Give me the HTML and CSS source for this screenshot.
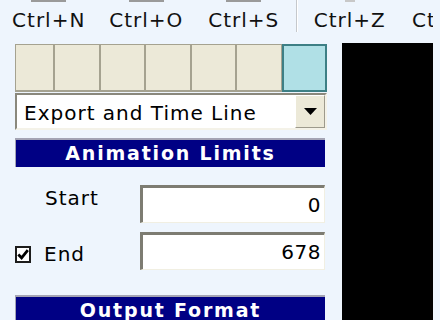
FILE: index.html
```html
<!DOCTYPE html>
<html>
<head>
<meta charset="utf-8">
<link rel="stylesheet" href="styles.css">
</head>
<body>
<div class="app">
  <div class="toolbar">
    <div class="tb-btn"><span class="tb-icon"></span><span class="tb-label">Ctrl+N</span></div>
    <div class="tb-btn"><span class="tb-icon"></span><span class="tb-label">Ctrl+O</span></div>
    <div class="tb-btn"><span class="tb-icon"></span><span class="tb-label">Ctrl+S</span></div>
    <div class="tb-sep"></div>
    <div class="tb-btn"><span class="tb-icon tb-icon-small"></span><span class="tb-label">Ctrl+Z</span></div>
    <div class="tb-btn"><span class="tb-icon tb-icon-small"></span><span class="tb-label">Ctrl+Y</span></div>
  </div>
  <div class="main">
    <div class="panel">
      <div class="swatches">
        <div class="swatch"></div>
        <div class="swatch"></div>
        <div class="swatch"></div>
        <div class="swatch"></div>
        <div class="swatch"></div>
        <div class="swatch"></div>
        <div class="swatch swatch-active"></div>
      </div>
      <div class="combo">
        <span class="combo-text">Export and Time Line</span>
        <span class="combo-btn"><svg width="13" height="7" viewBox="0 0 13 7"><polygon points="0,0 13,0 6.5,7" fill="#000"/></svg></span>
      </div>
      <div class="section-head">Animation Limits</div>
      <div class="field-row field-row-first">
        <span class="field-label field-label-start">Start</span>
        <div class="field-input">0</div>
      </div>
      <div class="field-row">
        <span class="field-label field-label-end">
          <span class="check"><svg width="12" height="11" viewBox="0 0 12 11"><path d="M1.3 5.5 L4.6 8.8 L10.8 1.2" fill="none" stroke="#000" stroke-width="2.8"/></svg></span>
          <span>End</span>
        </span>
        <div class="field-input">678</div>
      </div>
      <div class="section-head section-head-second">Output Format</div>
    </div>
    <div class="preview"></div>
  </div>
</div>
</body>
</html>
```

FILE: styles.css
```css
html, body {
  margin: 0;
  padding: 0;
  background: #eef5fd;
  overflow: hidden;
}

body {
  font-family: "DejaVu Sans", Verdana, sans-serif;
  font-size: 20px;
  color: #000;
  width: 440px;
  height: 320px;
}

.app {
  display: flex;
  flex-direction: column;
  width: 440px;
  height: 320px;
  overflow: hidden;
}

.toolbar {
  display: flex;
  width: 433px;
  height: 43px;
  flex: none;
  white-space: nowrap;
  overflow: hidden;
}

.tb-btn {
  width: 97.5px;
  flex: none;
  display: flex;
  flex-direction: column;
  align-items: center;
}

.tb-icon {
  display: block;
  width: 35px;
  height: 2px;
  background: #9a9a9a;
  margin-bottom: 6px;
}

.tb-icon-small {
  width: 10px;
  background: #c8c8c8;
}

.tb-label {
  display: block;
  line-height: 24px;
  letter-spacing: 1px;
  color: #111;
}

.tb-sep {
  flex: none;
  width: 8.5px;
  height: 32px;
  display: flex;
  justify-content: center;
}

.tb-sep::before {
  content: "";
  width: 1px;
  height: 32px;
  background: #c5c8cc;
  border-right: 1px solid #ffffff;
}

.main {
  flex: 1 1 auto;
  display: flex;
  align-items: flex-start;
  padding-left: 15px;
  min-height: 0;
}

.panel {
  width: 312px;
  flex: none;
  display: flex;
  flex-direction: column;
  padding-top: 1px;
}

.panel > * {
  flex-shrink: 0;
}

.swatches {
  display: grid;
  grid-template-columns: 39px repeat(6, 1fr);
  height: 48px;
  box-sizing: border-box;
}

.swatch {
  background: #ece9d8;
  border: 1px solid #a5a290;
  border-width: 1px 1px 2px 1px;
}

.swatch-active {
  background: #b0e0e6;
  border: 2px solid #3d7f85;
}

.combo {
  margin-top: 1px;
  height: 37px;
  box-sizing: border-box;
  background: #fff;
  border-style: solid;
  border-width: 2px;
  border-color: #8a887c #f4f2e8 #f4f2e8 #8a887c;
  display: flex;
  align-items: center;
}

.combo-text {
  flex: 1;
  padding-left: 7px;
  padding-top: 3px;
  letter-spacing: 1px;
  line-height: 24px;
}

.combo-btn {
  width: 30px;
  align-self: stretch;
  box-sizing: border-box;
  background: #ece9d8;
  border-style: solid;
  border-width: 1px;
  border-color: #ffffff #9d9a8c #9d9a8c #ffffff;
  display: flex;
  align-items: center;
  justify-content: center;
}

.section-head {
  margin-top: 8px;
  margin-right: 2px;
  height: 29px;
  box-sizing: border-box;
  background: #000084;
  border-top: 2px solid #a4a4b4;
  border-left: 1px solid #a4a4b4;
  color: #fff;
  font-weight: bold;
  font-size: 19px;
  letter-spacing: 1.8px;
  text-align: center;
  line-height: 26px;
}

.section-head-second {
  margin-top: 25px;
}

.field-row {
  display: grid;
  grid-template-columns: 125px 1fr;
  align-items: start;
  margin-right: 2px;
  margin-top: 9px;
  height: 38px;
}

.field-row-first {
  margin-top: 18px;
}

.field-label {
  display: flex;
  align-items: center;
  gap: 13px;
  letter-spacing: 1px;
  line-height: 24px;
}

.field-label-start {
  padding-left: 30px;
  margin-top: 1px;
}

.field-label-end {
  margin-top: 10px;
}

.check {
  width: 16px;
  height: 17px;
  box-sizing: border-box;
  border: 2px solid #1c1c1c;
  background: #fff;
  display: flex;
  align-items: center;
  justify-content: center;
}

.field-input {
  height: 38px;
  box-sizing: border-box;
  background: #fff;
  border-style: solid;
  border-width: 3px 1px 1px 3px;
  border-color: #7d7c72 #f1efe2 #f1efe2 #7d7c72;
  text-align: right;
  padding-right: 3px;
  line-height: 34px;
  letter-spacing: 0.5px;
}

.preview {
  width: 91px;
  height: 277px;
  flex: none;
  margin-left: 15px;
  background: #000;
}
```
